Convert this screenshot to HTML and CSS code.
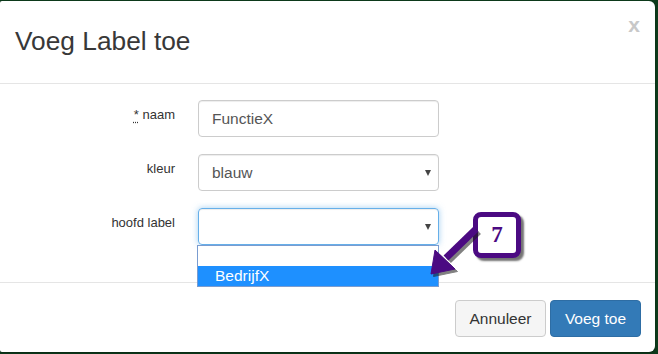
FILE: index.html
```html
<!DOCTYPE html>
<html>
<head>
<meta charset="utf-8">
<link rel="stylesheet" href="styles.css">
</head>
<body>
<div class="modal">
  <div class="modal-header">
    <h4 class="modal-title">Voeg Label toe</h4>
    <span class="close">x</span>
  </div>
  <div class="modal-body">
    <form class="form">
      <label class="lbl"><abbr class="req" title="verplicht">*</abbr> naam</label>
      <div class="control"><div class="input">FunctieX</div></div>
      <label class="lbl">kleur</label>
      <div class="control"><div class="input select">blauw<span class="caret"></span></div></div>
      <label class="lbl">hoofd label</label>
      <div class="control">
        <div class="input select focus"><span></span><span class="caret"></span></div>
        <div class="dropdown">
          <div class="opt"></div>
          <div class="opt sel">BedrijfX</div>
        </div>
      </div>
    </form>
  </div>
  <div class="modal-footer">
    <button class="btn btn-default">Annuleer</button>
    <button class="btn btn-primary">Voeg toe</button>
  </div>
</div>
<div class="callout">7</div>
<svg class="arrow" width="658" height="354" viewBox="0 0 658 354">
  <g transform="translate(2.5,2.5)" fill="#1a1a1a" stroke="#1a1a1a" opacity="0.55">
    <line x1="476" y1="229" x2="446" y2="258" stroke-width="7"/>
    <polygon points="431,274 435,250 455,269" stroke-width="1"/>
  </g>
  <g fill="#4b0a82" stroke="#4b0a82">
    <line x1="476" y1="229" x2="446" y2="258" stroke-width="7"/>
    <polygon points="431,274 435,250 455,269" stroke-width="1" stroke-linejoin="round"/>
  </g>
</svg>
</body>
</html>
```

FILE: styles.css
```css
html, body {
  margin: 0;
  padding: 0;
}
body {
  width: 658px;
  height: 354px;
  overflow: hidden;
  background: #0d3a1b;
  padding-top: 1px;
  box-sizing: border-box;
  font-family: "Liberation Sans", Arial, sans-serif;
  color: #333;
  position: relative;
}
.modal {
  margin: 0 3px 0 0;
  height: 351px;
  background: #fff;
  border-radius: 2px 6px 6px 2px;
  display: flex;
  flex-direction: column;
  box-shadow: 0 1px 2px rgba(0,0,0,0.3);
}
.modal-header {
  height: 82px;
  border-bottom: 1px solid #e5e5e5;
  display: flex;
  justify-content: space-between;
  align-items: flex-start;
  padding: 0 15px;
}
.modal-title {
  margin: 26px 0 0 0;
  font-size: 26.3px;
  font-weight: normal;
  line-height: 1.1;
  color: #383838;
}
.close {
  margin-top: 13px;
  font-size: 21px;
  font-weight: bold;
  line-height: 1;
  color: #c8c8c8;
}
.modal-body {
  padding: 16px 0 37px 0;
}
.form {
  display: grid;
  grid-template-columns: 175px 241px;
  column-gap: 23px;
  row-gap: 17px;
  margin: 0;
}
.lbl {
  text-align: right;
  font-size: 13px;
  line-height: 18px;
  padding-top: 6px;
  color: #333;
}
.req {
  text-decoration: underline dotted;
  text-underline-offset: 3px;
}
.control {
  position: relative;
}
.input {
  height: 37px;
  box-sizing: border-box;
  border: 1px solid #ccc;
  border-radius: 4px;
  padding: 0 13px;
  font-size: 15.5px;
  line-height: 35px;
  color: #555;
  box-shadow: inset 0 1px 1px rgba(0,0,0,0.075);
}
.select {
  display: flex;
  justify-content: space-between;
  align-items: center;
  padding-right: 7px;
}
.caret {
  width: 0;
  height: 0;
  border-left: 3.5px solid transparent;
  border-right: 3.5px solid transparent;
  border-top: 6px solid #444;
  margin-top: 1px;
}
.focus {
  border-color: #66afe9;
  box-shadow: inset 0 1px 1px rgba(0,0,0,0.075), 0 0 6px rgba(102,175,233,0.6);
}
.dropdown {
  position: absolute;
  left: -1px;
  top: 37px;
  width: 242px;
  box-sizing: border-box;
  border: 1px solid #7a9cd0;
  background: #fff;
  z-index: 2;
}
.opt {
  height: 20px;
  line-height: 20px;
  font-size: 15.5px;
  padding-left: 17px;
  color: #000;
}
.opt.sel {
  background: #1e90ff;
  color: #fff;
}
.modal-footer {
  border-top: 1px solid #e5e5e5;
  display: flex;
  justify-content: flex-end;
  gap: 4px;
  padding: 17px 14px 0 0;
}
.btn {
  width: 91px;
  height: 37px;
  border-radius: 4px;
  font-family: "Liberation Sans", Arial, sans-serif;
  font-size: 15.5px;
  padding: 0;
  border: 1px solid #ccc;
}
.btn-default {
  background: #f5f5f5;
  color: #333;
  border-color: #ccc;
}
.btn-primary {
  background: #337ab7;
  border-color: #2e6da4;
  color: #fff;
}
.callout {
  position: absolute;
  left: 473px;
  top: 212px;
  width: 48px;
  height: 46px;
  box-sizing: border-box;
  border: 5px solid #4b0a82;
  border-radius: 8px;
  background: #fff;
  box-shadow: 3px 3px 2px rgba(0,0,0,0.55);
  font-family: "Liberation Serif", "Times New Roman", serif;
  font-weight: bold;
  font-size: 23px;
  color: #4b0a82;
  display: flex;
  align-items: center;
  justify-content: center;
  z-index: 3;
}
.arrow {
  position: absolute;
  left: 0;
  top: 0;
  z-index: 4;
  pointer-events: none;
}
```
